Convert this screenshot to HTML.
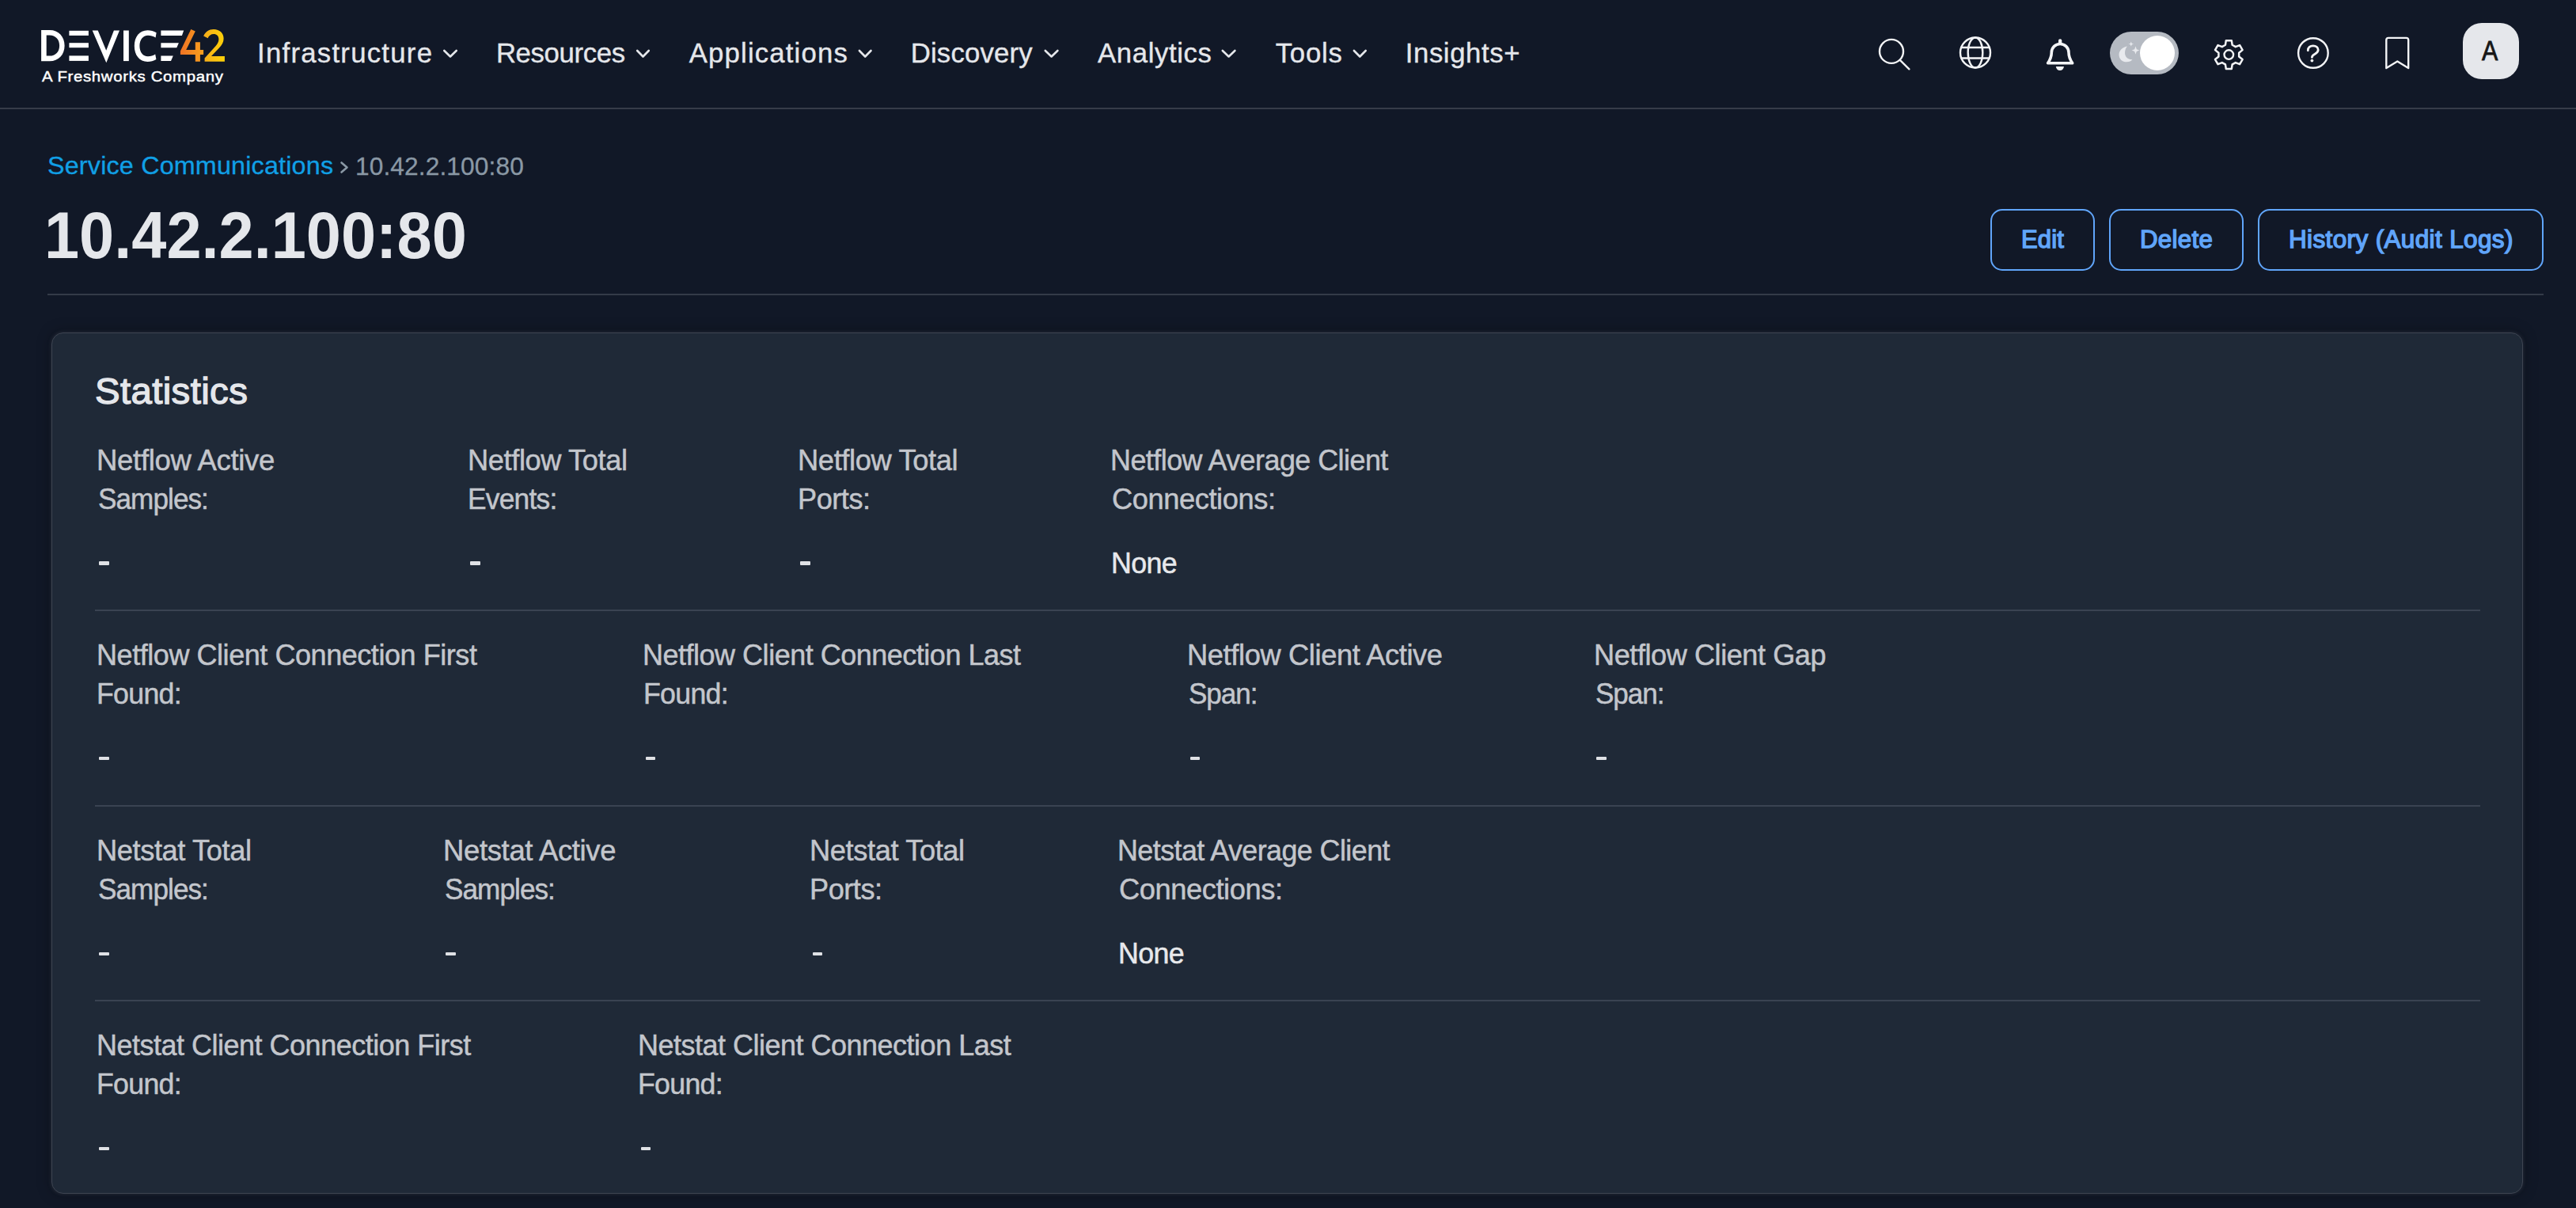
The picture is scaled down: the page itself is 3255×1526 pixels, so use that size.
<!DOCTYPE html>
<html><head><meta charset="utf-8"><title>10.42.2.100:80</title>
<style>
html,body{margin:0;padding:0}
body{width:3255px;height:1526px;background:#111827;position:relative;overflow:hidden;font-family:"Liberation Sans",sans-serif}
.t{position:absolute;line-height:1;white-space:nowrap}
.abs{position:absolute}
.dash{position:absolute;width:12.5px;height:4.2px;background:#dfe1e5;border-radius:1px}
.btn{position:absolute;box-sizing:border-box;border:2.5px solid #60a5fa;border-radius:15px;top:264px;height:78px}
.hr{position:absolute;height:2px}
</style></head><body>
<!-- nav bottom border -->
<div class="hr" style="left:0;top:136px;width:3255px;background:#363c49"></div>
<!-- logo -->
<svg class="abs" style="left:0;top:0" width="300" height="120" viewBox="0 0 300 120">
 <defs>
  <linearGradient id="g4" x1="0" y1="0" x2="1" y2="0"><stop offset="0" stop-color="#ef7324"/><stop offset="1" stop-color="#f8a01e"/></linearGradient>
  <linearGradient id="g2" x1="0" y1="0" x2="1" y2="0"><stop offset="0" stop-color="#f6ac1b"/><stop offset="1" stop-color="#fdd208"/></linearGradient>
 </defs>
 <g fill="#ffffff">
  <!-- D -->
  <path d="M52.1 38.1 H62.8 C74 38.1 81.6 46.3 81.6 57.65 C81.6 69 74 77.2 62.8 77.2 H52.1 Z M58.7 44.6 V70.6 H62.6 C70.3 70.6 75.1 65.2 75.1 57.65 C75.1 50.1 70.3 44.6 62.6 44.6 Z" fill-rule="evenodd"/>
  <!-- E bars -->
  <rect x="87.4" y="38.8" width="24.5" height="6.1"/>
  <rect x="87.4" y="54.2" width="24.5" height="6.0"/>
  <rect x="87.4" y="70.4" width="24.5" height="6.5"/>
  <!-- V -->
  <path d="M116.7 38.5 H123.7 L134.2 63.8 L143.9 38.5 H151 L134.3 79.2 Z"/>
  <!-- I -->
  <rect x="156" y="38.5" width="6.8" height="38.6"/>
  <!-- C -->
  <path d="M197.6 41.2 C194.2 39.2 190.5 38.2 186.5 38.2 C176.2 38.2 169.8 46.5 169.8 58 C169.8 69.6 176.2 77.9 186.5 77.9 C190.5 77.9 194.2 76.9 197.4 74.9 L196.2 68.6 C193.5 70.4 190.5 71.3 187 71.3 C180.5 71.3 176.4 65.8 176.4 58 C176.4 50.3 180.5 44.8 187 44.8 C190.5 44.8 193.5 45.8 196.6 47.6 Z"/>
  <!-- slanted E -->
  <path d="M203.4 38.6 H232.2 L229.9 44.9 H203.4 Z"/>
  <path d="M203.4 54.2 H225.9 L223.3 60.2 H203.4 Z"/>
  <path d="M203.4 70.4 H218.8 L216 76.9 H203.4 Z"/>
 </g>
 <!-- 4 -->
 <path fill="url(#g4)" d="M241.3 37.1 L246.8 39.4 L235.2 63 H246.8 V53.2 H252.9 V63 H257.1 V68.9 H252.9 V77.7 H246.8 V68.9 H227.9 V64.5 Z"/>
 <!-- 2 -->
 <path fill="url(#g2)" d="M257.2 45.5 C259.4 40.2 264 37 270 37 C277.5 37 282.6 42 282.6 48.8 C282.6 53.5 280.5 57 276.5 61 L267 71.1 H283.9 V77.7 H258.6 V73.5 L272.2 58.6 C275 55.6 276.4 52.8 276.4 49.6 C276.4 45.5 273.8 43 270 43 C266.6 43 263.9 45 262.6 48.3 Z"/>
</svg>
<!-- chevrons -->
<svg class="abs" style="left:0;top:0" width="1800" height="120" viewBox="0 0 1800 120" fill="none" stroke="#e5e7eb" stroke-width="2.6" stroke-linecap="round" stroke-linejoin="round">
 <polyline points="561.3,64 569,71.5 576.7,64"/>
 <polyline points="805.2,64 812.5,71.5 819.8,64"/>
 <polyline points="1085.9,64 1093.2,71.5 1100.5,64"/>
 <polyline points="1320.8,64 1328.6,71.5 1336.4,64"/>
 <polyline points="1544.8,64 1552.6,71.5 1560.4,64"/>
 <polyline points="1710.9,64 1718.3,71.5 1725.7,64"/>
</svg>
<!-- right icons -->
<svg class="abs" style="left:2300px;top:0" width="955" height="130" viewBox="2300 0 955 130" fill="none" stroke="#f3f4f6" stroke-width="2.4" stroke-linecap="round" stroke-linejoin="round">
 <!-- search -->
 <circle cx="2390" cy="64.9" r="15"/>
 <line x1="2400.8" y1="75.8" x2="2412.4" y2="87.3"/>
 <!-- globe -->
 <circle cx="2496" cy="66.5" r="19"/>
 <ellipse cx="2496" cy="66.5" rx="9.3" ry="19"/>
 <line x1="2478.5" y1="60" x2="2513.5" y2="60"/>
 <line x1="2478.5" y1="73.5" x2="2513.5" y2="73.5"/>
 <!-- bell -->
 <path d="M2587.6 79.8 C2590.6 75.5 2592.3 71.5 2592.3 66.3 A10.85 10.85 0 0 1 2614 66.3 C2614 71.5 2615.7 75.5 2618.7 79.8 Z" stroke-width="3.6"/>
 <path d="M2601 54 V51.3 A2.15 2.15 0 0 1 2605.3 51.3 V54 Z" fill="#f3f4f6" stroke="none"/>
 <path d="M2597.8 83.9 H2608 C2607.6 87 2605.6 89 2602.9 89 C2600.2 89 2598.2 87 2597.8 83.9 Z" fill="#f3f4f6" stroke="none"/>
 <!-- gear -->
 <path d="M2820.67 56.75 L2819.79 51.14 L2812.81 51.14 L2811.93 56.75 L2807.79 59.14 L2802.49 57.09 L2799.00 63.14 L2803.42 66.71 L2803.42 71.49 L2799.00 75.06 L2802.49 81.11 L2807.79 79.06 L2811.93 81.45 L2812.81 87.06 L2819.79 87.06 L2820.67 81.45 L2824.81 79.06 L2830.11 81.11 L2833.60 75.06 L2829.18 71.49 L2829.18 66.71 L2833.60 63.14 L2830.11 57.09 L2824.81 59.14 Z" stroke-width="2.5"/>
 <circle cx="2816.3" cy="69.1" r="5.8"/>
 <!-- help -->
 <circle cx="2922.9" cy="67" r="18.8"/>
 <path d="M2916.3 63.8 C2916.3 60 2919 57.8 2922.8 57.8 C2926.6 57.8 2929.2 60.1 2929.2 63 C2929.2 65.5 2927.6 66.8 2925.1 68.2 C2922.6 69.6 2921.4 70.6 2921.4 72.4" stroke-width="2.8"/>
 <circle cx="2921.4" cy="76.6" r="1.9" fill="#f3f4f6" stroke="none"/>
 <!-- bookmark -->
 <path d="M3015.3 86 V50.5 C3015.3 48.9 3016.5 47.9 3018 47.9 H3040.5 C3042 47.9 3043.2 48.9 3043.2 50.5 V86 L3029.3 77.4 Z"/>
</svg>
<!-- theme toggle -->
<div class="abs" style="left:2666px;top:40px;width:87px;height:54px;border-radius:27px;background:#b5bac2"></div>
<div class="abs" style="left:2704px;top:45px;width:44px;height:44px;border-radius:50%;background:#ffffff"></div>
<svg class="abs" style="left:2670px;top:45px" width="40" height="45" viewBox="2670 45 40 45">
 <path fill="#e8eaee" d="M2688 58.5 C2682.5 59.5 2677.5 63.5 2677.5 69 C2677.5 75 2682 78.3 2687 78.3 C2690.5 78.3 2693 77 2694.5 75.2 C2688.5 75.5 2685 71.5 2685 67 C2685 63.3 2686.3 60.3 2688 58.5 Z"/>
 <path fill="#e8eaee" d="M2692.8 52.5 L2693.8 55 L2696.2 55.5 L2693.8 56.2 L2692.8 58.6 L2691.8 56.2 L2689.4 55.5 L2691.8 55 Z"/>
 <path fill="#e8eaee" d="M2698.5 58.5 L2699.8 62.3 L2703.3 63.6 L2699.8 64.9 L2698.5 68.6 L2697.2 64.9 L2693.7 63.6 L2697.2 62.3 Z"/>
</svg>
<!-- avatar -->
<div class="abs" style="left:3112px;top:28.8px;width:71px;height:71.3px;border-radius:24px;background:#e5e7eb"></div>
<!-- breadcrumb chevron -->
<svg class="abs" style="left:420px;top:195px" width="30" height="30" viewBox="420 195 30 30" fill="none" stroke="#8a98a5" stroke-width="2.6" stroke-linecap="round" stroke-linejoin="round">
 <polyline points="431.5,205.5 438.5,211.5 431.5,217.5"/>
</svg>
<!-- title divider -->
<div class="hr" style="left:60px;top:371px;width:3154px;background:#343b48"></div>
<!-- buttons -->
<div class="btn" style="left:2514.7px;width:132px"></div>
<div class="btn" style="left:2665px;width:170px"></div>
<div class="btn" style="left:2853px;width:361px"></div>
<!-- card -->
<div class="abs" style="left:65.2px;top:419.6px;width:3123px;height:1088px;box-sizing:border-box;background:#1f2937;border:1.6px solid #3e4451;border-radius:15px;box-shadow:0 0 5px rgba(140,150,170,0.22),0 0 18px rgba(0,0,0,0.35)"></div>
<div class="hr" style="left:120px;top:769.8px;width:3014px;background:#3a4352"></div>
<div class="hr" style="left:120px;top:1016.6px;width:3014px;background:#3a4352"></div>
<div class="hr" style="left:120px;top:1263.2px;width:3014px;background:#3a4352"></div>
<div class="t" style="left:325.09px;top:49.81px;font-size:34.74px;font-weight:400;color:#e5e7eb;letter-spacing:1.252px;-webkit-text-stroke:0.35px #e5e7eb">Infrastructure</div>
<div class="t" style="left:626.89px;top:49.81px;font-size:34.74px;font-weight:400;color:#e5e7eb;letter-spacing:-0.355px;-webkit-text-stroke:0.35px #e5e7eb">Resources</div>
<div class="t" style="left:870.80px;top:49.81px;font-size:34.74px;font-weight:400;color:#e5e7eb;letter-spacing:1.152px;-webkit-text-stroke:0.35px #e5e7eb">Applications</div>
<div class="t" style="left:1150.69px;top:49.81px;font-size:34.74px;font-weight:400;color:#e5e7eb;letter-spacing:0.191px;-webkit-text-stroke:0.35px #e5e7eb">Discovery</div>
<div class="t" style="left:1387.10px;top:49.81px;font-size:34.74px;font-weight:400;color:#e5e7eb;letter-spacing:0.610px;-webkit-text-stroke:0.35px #e5e7eb">Analytics</div>
<div class="t" style="left:1611.66px;top:49.81px;font-size:34.74px;font-weight:400;color:#e5e7eb;letter-spacing:0.808px;-webkit-text-stroke:0.35px #e5e7eb">Tools</div>
<div class="t" style="left:1775.69px;top:49.81px;font-size:34.74px;font-weight:400;color:#e5e7eb;letter-spacing:0.612px;-webkit-text-stroke:0.35px #e5e7eb">Insights+</div>
<div class="t" style="left:52.70px;top:86.77px;font-size:19.19px;font-weight:400;color:#ffffff;letter-spacing:0.627px;transform:scaleX(1.0618);transform-origin:0 0;-webkit-text-stroke:0.45px #ffffff">A Freshworks Company</div>
<div class="t" style="left:3136.00px;top:46.75px;font-size:35.76px;font-weight:400;color:#161616;transform:scaleX(0.8533);transform-origin:0 0;-webkit-text-stroke:0.8px #161616">A</div>
<div class="t" style="left:59.99px;top:194.19px;font-size:31.69px;font-weight:400;color:#10a0e6;letter-spacing:0.197px;transform:scaleX(1.0182);transform-origin:0 0;-webkit-text-stroke:0.3px #10a0e6">Service Communications</div>
<div class="t" style="left:449.02px;top:194.56px;font-size:31.25px;font-weight:400;color:#8a98a5;letter-spacing:0.128px;transform:scaleX(1.0123);transform-origin:0 0;-webkit-text-stroke:0.3px #8a98a5">10.42.2.100:80</div>
<div class="t" style="left:56.04px;top:255.20px;font-size:84.16px;font-weight:700;color:#e5e7eb;transform:scaleX(0.9427);transform-origin:0 0">10.42.2.100:80</div>
<div class="t" style="left:2553.58px;top:287.25px;font-size:30.67px;font-weight:400;color:#60a5fa;letter-spacing:0.172px;transform:scaleX(1.0103);transform-origin:0 0;-webkit-text-stroke:1.4px #60a5fa">Edit</div>
<div class="t" style="left:2704.36px;top:287.25px;font-size:30.67px;font-weight:400;color:#60a5fa;letter-spacing:0.313px;transform:scaleX(1.0187);transform-origin:0 0;-webkit-text-stroke:1.4px #60a5fa">Delete</div>
<div class="t" style="left:2891.74px;top:287.25px;font-size:30.67px;font-weight:400;color:#60a5fa;letter-spacing:0.361px;transform:scaleX(1.0266);transform-origin:0 0;-webkit-text-stroke:1.4px #60a5fa">History (Audit Logs)</div>
<div class="t" style="left:120.12px;top:471.15px;font-size:46.51px;font-weight:400;color:#e5e7eb;letter-spacing:0.366px;transform:scaleX(1.0183);transform-origin:0 0;-webkit-text-stroke:1.3px #e5e7eb">Statistics</div>
<div class="t" style="left:121.95px;top:562.57px;font-size:37.50px;font-weight:400;color:#c3c6cc;letter-spacing:-0.320px;transform:scaleX(0.9739);transform-origin:0 0;-webkit-text-stroke:0.5px #c3c6cc">Netflow Active</div>
<div class="t" style="left:123.70px;top:611.57px;font-size:37.50px;font-weight:400;color:#c3c6cc;letter-spacing:-0.986px;transform:scaleX(0.9361);transform-origin:0 0;-webkit-text-stroke:0.5px #c3c6cc">Samples:</div>
<div class="t" style="left:591.07px;top:562.57px;font-size:37.50px;font-weight:400;color:#c3c6cc;letter-spacing:-0.406px;transform:scaleX(0.9663);transform-origin:0 0;-webkit-text-stroke:0.5px #c3c6cc">Netflow Total</div>
<div class="t" style="left:591.14px;top:611.57px;font-size:37.50px;font-weight:400;color:#c3c6cc;letter-spacing:-0.810px;transform:scaleX(0.9422);transform-origin:0 0;-webkit-text-stroke:0.5px #c3c6cc">Events:</div>
<div class="t" style="left:1008.06px;top:562.57px;font-size:37.50px;font-weight:400;color:#c3c6cc;letter-spacing:-0.385px;transform:scaleX(0.9680);transform-origin:0 0;-webkit-text-stroke:0.5px #c3c6cc">Netflow Total</div>
<div class="t" style="left:1008.08px;top:611.57px;font-size:37.50px;font-weight:400;color:#c3c6cc;letter-spacing:-0.467px;transform:scaleX(0.9632);transform-origin:0 0;-webkit-text-stroke:0.5px #c3c6cc">Ports:</div>
<div class="t" style="left:1403.40px;top:562.57px;font-size:37.50px;font-weight:400;color:#c3c6cc;letter-spacing:-0.545px;transform:scaleX(0.9566);transform-origin:0 0;-webkit-text-stroke:0.5px #c3c6cc">Netflow Average Client</div>
<div class="t" style="left:1404.50px;top:611.57px;font-size:37.50px;font-weight:400;color:#c3c6cc;letter-spacing:-0.441px;transform:scaleX(0.9670);transform-origin:0 0;-webkit-text-stroke:0.5px #c3c6cc">Connections:</div>
<div class="t" style="left:121.99px;top:809.07px;font-size:37.50px;font-weight:400;color:#c3c6cc;letter-spacing:-0.469px;transform:scaleX(0.9604);transform-origin:0 0;-webkit-text-stroke:0.5px #c3c6cc">Netflow Client Connection First</div>
<div class="t" style="left:122.01px;top:858.07px;font-size:37.50px;font-weight:400;color:#c3c6cc;letter-spacing:-0.742px;transform:scaleX(0.9520);transform-origin:0 0;-webkit-text-stroke:0.5px #c3c6cc">Found:</div>
<div class="t" style="left:812.49px;top:809.07px;font-size:37.50px;font-weight:400;color:#c3c6cc;letter-spacing:-0.498px;transform:scaleX(0.9592);transform-origin:0 0;-webkit-text-stroke:0.5px #c3c6cc">Netflow Client Connection Last</div>
<div class="t" style="left:812.51px;top:858.07px;font-size:37.50px;font-weight:400;color:#c3c6cc;letter-spacing:-0.742px;transform:scaleX(0.9520);transform-origin:0 0;-webkit-text-stroke:0.5px #c3c6cc">Found:</div>
<div class="t" style="left:1500.17px;top:809.07px;font-size:37.50px;font-weight:400;color:#c3c6cc;letter-spacing:-0.387px;transform:scaleX(0.9669);transform-origin:0 0;-webkit-text-stroke:0.5px #c3c6cc">Netflow Client Active</div>
<div class="t" style="left:1501.91px;top:858.07px;font-size:37.50px;font-weight:400;color:#c3c6cc;letter-spacing:-1.096px;transform:scaleX(0.9343);transform-origin:0 0;-webkit-text-stroke:0.5px #c3c6cc">Span:</div>
<div class="t" style="left:2013.88px;top:809.07px;font-size:37.50px;font-weight:400;color:#c3c6cc;letter-spacing:-0.461px;transform:scaleX(0.9632);transform-origin:0 0;-webkit-text-stroke:0.5px #c3c6cc">Netflow Client Gap</div>
<div class="t" style="left:2015.61px;top:858.07px;font-size:37.50px;font-weight:400;color:#c3c6cc;letter-spacing:-1.096px;transform:scaleX(0.9343);transform-origin:0 0;-webkit-text-stroke:0.5px #c3c6cc">Span:</div>
<div class="t" style="left:121.97px;top:1055.58px;font-size:37.50px;font-weight:400;color:#c3c6cc;letter-spacing:-0.401px;transform:scaleX(0.9656);transform-origin:0 0;-webkit-text-stroke:0.5px #c3c6cc">Netstat Total</div>
<div class="t" style="left:123.70px;top:1104.58px;font-size:37.50px;font-weight:400;color:#c3c6cc;letter-spacing:-0.986px;transform:scaleX(0.9361);transform-origin:0 0;-webkit-text-stroke:0.5px #c3c6cc">Samples:</div>
<div class="t" style="left:559.95px;top:1055.58px;font-size:37.50px;font-weight:400;color:#c3c6cc;letter-spacing:-0.338px;transform:scaleX(0.9717);transform-origin:0 0;-webkit-text-stroke:0.5px #c3c6cc">Netstat Active</div>
<div class="t" style="left:561.70px;top:1104.58px;font-size:37.50px;font-weight:400;color:#c3c6cc;letter-spacing:-0.986px;transform:scaleX(0.9361);transform-origin:0 0;-webkit-text-stroke:0.5px #c3c6cc">Samples:</div>
<div class="t" style="left:1023.17px;top:1055.58px;font-size:37.50px;font-weight:400;color:#c3c6cc;letter-spacing:-0.394px;transform:scaleX(0.9662);transform-origin:0 0;-webkit-text-stroke:0.5px #c3c6cc">Netstat Total</div>
<div class="t" style="left:1023.18px;top:1104.58px;font-size:37.50px;font-weight:400;color:#c3c6cc;letter-spacing:-0.467px;transform:scaleX(0.9632);transform-origin:0 0;-webkit-text-stroke:0.5px #c3c6cc">Ports:</div>
<div class="t" style="left:1412.40px;top:1055.58px;font-size:37.50px;font-weight:400;color:#c3c6cc;letter-spacing:-0.557px;transform:scaleX(0.9550);transform-origin:0 0;-webkit-text-stroke:0.5px #c3c6cc">Netstat Average Client</div>
<div class="t" style="left:1413.50px;top:1104.58px;font-size:37.50px;font-weight:400;color:#c3c6cc;letter-spacing:-0.441px;transform:scaleX(0.9670);transform-origin:0 0;-webkit-text-stroke:0.5px #c3c6cc">Connections:</div>
<div class="t" style="left:121.99px;top:1302.28px;font-size:37.50px;font-weight:400;color:#c3c6cc;letter-spacing:-0.490px;transform:scaleX(0.9582);transform-origin:0 0;-webkit-text-stroke:0.5px #c3c6cc">Netstat Client Connection First</div>
<div class="t" style="left:122.01px;top:1351.28px;font-size:37.50px;font-weight:400;color:#c3c6cc;letter-spacing:-0.742px;transform:scaleX(0.9520);transform-origin:0 0;-webkit-text-stroke:0.5px #c3c6cc">Found:</div>
<div class="t" style="left:806.39px;top:1302.28px;font-size:37.50px;font-weight:400;color:#c3c6cc;letter-spacing:-0.500px;transform:scaleX(0.9586);transform-origin:0 0;-webkit-text-stroke:0.5px #c3c6cc">Netstat Client Connection Last</div>
<div class="t" style="left:806.41px;top:1351.28px;font-size:37.50px;font-weight:400;color:#c3c6cc;letter-spacing:-0.742px;transform:scaleX(0.9520);transform-origin:0 0;-webkit-text-stroke:0.5px #c3c6cc">Found:</div>
<div class="t" style="left:1404.30px;top:692.74px;font-size:37.06px;font-weight:400;color:#e8e9ec;letter-spacing:-0.664px;transform:scaleX(0.9657);transform-origin:0 0;-webkit-text-stroke:0.5px #e8e9ec">None</div>
<div class="t" style="left:1413.30px;top:1185.74px;font-size:37.06px;font-weight:400;color:#e8e9ec;letter-spacing:-0.664px;transform:scaleX(0.9657);transform-origin:0 0;-webkit-text-stroke:0.5px #e8e9ec">None</div><div class="dash" style="left:125.3px;top:709.4px"></div><div class="dash" style="left:594.4px;top:709.4px"></div><div class="dash" style="left:1011.4px;top:709.4px"></div><div class="dash" style="left:125.3px;top:955.9px"></div><div class="dash" style="left:815.8px;top:955.9px"></div><div class="dash" style="left:1503.5px;top:955.9px"></div><div class="dash" style="left:2017.2px;top:955.9px"></div><div class="dash" style="left:125.3px;top:1202.5px"></div><div class="dash" style="left:563.3px;top:1202.5px"></div><div class="dash" style="left:1026.5px;top:1202.5px"></div><div class="dash" style="left:125.3px;top:1449.2px"></div><div class="dash" style="left:809.7px;top:1449.2px"></div></body></html>
